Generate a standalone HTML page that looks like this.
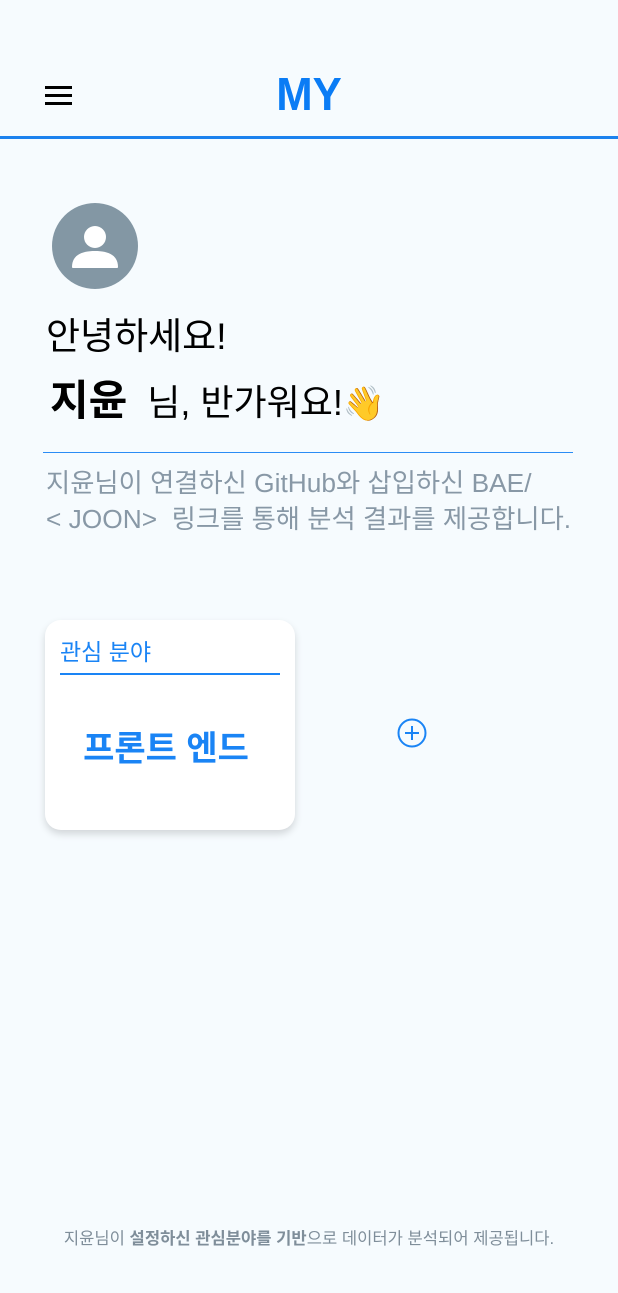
<!DOCTYPE html>
<html><head><meta charset="utf-8"><style>
*{margin:0;padding:0;box-sizing:border-box}
body{width:618px;height:1293px;background:#f6fbfe;font-family:"Liberation Sans","Noto Sans CJK KR",sans-serif;position:relative;overflow:hidden}
.a{position:absolute;white-space:nowrap}
</style></head><body>
<div class="a" style="left:45px;top:86px;width:27px;height:3px;background:#000"></div>
<div class="a" style="left:45px;top:94px;width:27px;height:3px;background:#000"></div>
<div class="a" style="left:45px;top:102px;width:27px;height:3px;background:#000"></div>
<div class="a" style="left:0;width:618px;top:68px;text-align:center;font-size:46px;font-weight:bold;color:#0a7cf5;line-height:52px;transform:scaleX(0.95)">MY</div>
<div class="a" style="left:0;top:136px;width:618px;height:3px;background:#1b82ee"></div>
<svg class="a" style="left:52px;top:203px" width="86" height="86" viewBox="0 0 86 86"><circle cx="43" cy="43" r="43" fill="#8397a4"/><circle cx="43" cy="34" r="11" fill="#fff"/><path d="M20 64c0-12 10-16 23-16s23 4 23 16c0 1-1 1-1 1H21s-1 0-1-1z" fill="#fff"/></svg>
<div class="a" style="left:46px;top:313px;font-size:37px;line-height:48px;color:#000">안녕하세요!</div>
<div class="a" style="left:50px;top:374px;font-size:36px;line-height:54px;color:#000"><b style="font-size:42px">지윤</b><span style="margin-left:20px">님, 반가워요!</span><span style="font-size:34px">👋</span></div>
<div class="a" style="left:43px;top:452px;width:530px;height:1px;background:#2a8cf5"></div>
<div class="a" style="left:46px;top:465px;font-size:26.3px;line-height:36px;color:#8898a6">지윤님이 연결하신 GitHub와 삽입하신 BAE/<br>&lt; JOON&gt;&nbsp; 링크를 통해 분석 결과를 제공합니다.</div>
<div class="a" style="left:45px;top:620px;width:250px;height:210px;background:#fff;border-radius:16px;box-shadow:0 4px 8px rgba(0,0,0,0.15)"></div>
<div class="a" style="left:60px;top:636px;font-size:23px;line-height:32px;color:#1a84f5">관심 분야</div>
<div class="a" style="left:60px;top:673px;width:220px;height:2px;background:#1a84f5"></div>
<div class="a" style="left:41px;width:250px;top:727px;text-align:center;font-size:34px;font-weight:bold;color:#1a84f5;line-height:44px">프론트 엔드</div>
<svg class="a" style="left:397px;top:718px" width="30" height="30" viewBox="0 0 30 30"><circle cx="15" cy="15" r="13.5" fill="none" stroke="#1a84f5" stroke-width="2"/><path d="M15 8v14M8 15h14" stroke="#1a84f5" stroke-width="2"/></svg>
<div class="a" style="left:0;width:618px;top:1228px;text-align:center;font-size:16.6px;line-height:22px;color:#7f8e9a">지윤님이 <b>설정하신 관심분야를 기반</b>으로 데이터가 분석되어 제공됩니다.</div>
</body></html>
